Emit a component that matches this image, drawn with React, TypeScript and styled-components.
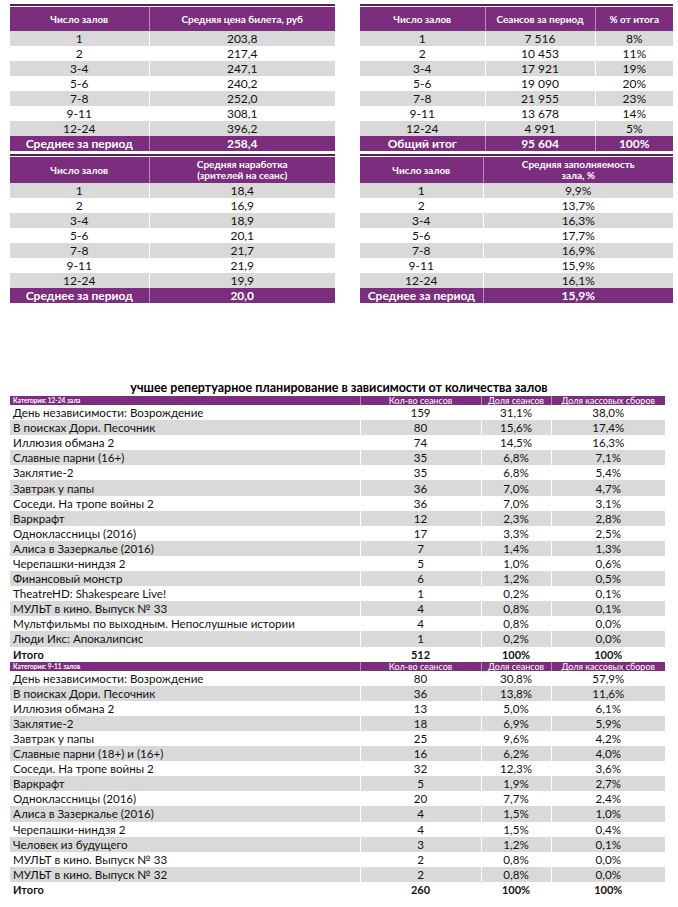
import React from 'react';
import styled, { createGlobalStyle } from 'styled-components';

const PURPLE = '#7b2d7e';
const PURPLE_DARK = '#5a1f5c';
const STRIPE = '#d9d9d9';

type SummaryTable = {
    headers: string[][];
    cols: number[];
    rows: string[][];
    total: string[];
    tall?: boolean;
};

const summaries: SummaryTable[] = [
    {
        headers: [['Число залов'], ['Средняя цена билета, руб']],
        cols: [139, 186],
        rows: [
            ['1', '203,8'], ['2', '217,4'], ['3-4', '247,1'], ['5-6', '240,2'],
            ['7-8', '252,0'], ['9-11', '308,1'], ['12-24', '396,2'],
        ],
        total: ['Среднее за период', '258,4'],
    },
    {
        headers: [['Число залов'], ['Сеансов за период'], ['% от итога']],
        cols: [125, 110, 78],
        rows: [
            ['1', '7 516', '8%'], ['2', '10 453', '11%'], ['3-4', '17 921', '19%'],
            ['5-6', '19 090', '20%'], ['7-8', '21 955', '23%'], ['9-11', '13 678', '14%'],
            ['12-24', '4 991', '5%'],
        ],
        total: ['Общий итог', '95 604', '100%'],
    },
    {
        headers: [['Число залов'], ['Средняя наработка', '(зрителей на сеанс)']],
        cols: [139, 186],
        rows: [
            ['1', '18,4'], ['2', '16,9'], ['3-4', '18,9'], ['5-6', '20,1'],
            ['7-8', '21,7'], ['9-11', '21,9'], ['12-24', '19,9'],
        ],
        total: ['Среднее за период', '20,0'],
        tall: true,
    },
    {
        headers: [['Число залов'], ['Средняя заполняемость', 'зала, %']],
        cols: [123, 190],
        rows: [
            ['1', '9,9%'], ['2', '13,7%'], ['3-4', '16,3%'], ['5-6', '17,7%'],
            ['7-8', '16,9%'], ['9-11', '15,9%'], ['12-24', '16,1%'],
        ],
        total: ['Среднее за период', '15,9%'],
        tall: true,
    },
];

type Category = {
    title: string;
    films: [string, string, string, string][];
    total: [string, string, string];
};

const categories: Category[] = [
    {
        title: 'Категория: 12-24 зала',
        films: [
            ['День независимости: Возрождение', '159', '31,1%', '38,0%'],
            ['В поисках Дори. Песочник', '80', '15,6%', '17,4%'],
            ['Иллюзия обмана 2', '74', '14,5%', '16,3%'],
            ['Славные парни (16+)', '35', '6,8%', '7,1%'],
            ['Заклятие-2', '35', '6,8%', '5,4%'],
            ['Завтрак у папы', '36', '7,0%', '4,7%'],
            ['Соседи. На тропе войны 2', '36', '7,0%', '3,1%'],
            ['Варкрафт', '12', '2,3%', '2,8%'],
            ['Одноклассницы (2016)', '17', '3,3%', '2,5%'],
            ['Алиса в Зазеркалье (2016)', '7', '1,4%', '1,3%'],
            ['Черепашки-ниндзя 2', '5', '1,0%', '0,6%'],
            ['Финансовый монстр', '6', '1,2%', '0,5%'],
            ['TheatreHD: Shakespeare Live!', '1', '0,2%', '0,1%'],
            ['МУЛЬТ в кино. Выпуск № 33', '4', '0,8%', '0,1%'],
            ['Мультфильмы по выходным. Непослушные истории', '4', '0,8%', '0,0%'],
            ['Люди Икс: Апокалипсис', '1', '0,2%', '0,0%'],
        ],
        total: ['512', '100%', '100%'],
    },
    {
        title: 'Категория: 9-11 залов',
        films: [
            ['День независимости: Возрождение', '80', '30,8%', '57,9%'],
            ['В поисках Дори. Песочник', '36', '13,8%', '11,6%'],
            ['Иллюзия обмана 2', '13', '5,0%', '6,1%'],
            ['Заклятие-2', '18', '6,9%', '5,9%'],
            ['Завтрак у папы', '25', '9,6%', '4,2%'],
            ['Славные парни (18+) и (16+)', '16', '6,2%', '4,0%'],
            ['Соседи. На тропе войны 2', '32', '12,3%', '3,6%'],
            ['Варкрафт', '5', '1,9%', '2,7%'],
            ['Одноклассницы (2016)', '20', '7,7%', '2,4%'],
            ['Алиса в Зазеркалье (2016)', '4', '1,5%', '1,0%'],
            ['Черепашки-ниндзя 2', '4', '1,5%', '0,4%'],
            ['Человек из будущего', '3', '1,2%', '0,1%'],
            ['МУЛЬТ в кино. Выпуск № 33', '2', '0,8%', '0,0%'],
            ['МУЛЬТ в кино. Выпуск № 32', '2', '0,8%', '0,0%'],
        ],
        total: ['260', '100%', '100%'],
    },
];

const App = () => {
    return (
        <Page>
            <GlobalStyle />
            <SummaryGrid>
                {summaries.map((t, i) => (
                    <Panel key={i}>
                        <Table>
                            <colgroup>
                                {t.cols.map((w, j) => <col key={j} style={{ width: w }} />)}
                            </colgroup>
                            <thead>
                                <HeadRow $tall={t.tall}>
                                    {t.headers.map((lines, j) => (
                                        <HeadCell key={j}>
                                            {lines.map((l, k) => <div key={k}>{l}</div>)}
                                        </HeadCell>
                                    ))}
                                </HeadRow>
                            </thead>
                            <tbody>
                                {t.rows.map((r, j) => (
                                    <BodyRow key={j} $striped={j % 2 === 0}>
                                        {r.map((c, k) => <BodyCell key={k}>{c}</BodyCell>)}
                                    </BodyRow>
                                ))}
                                <TotalRow>
                                    {t.total.map((c, k) => <TotalCell key={k}>{c}</TotalCell>)}
                                </TotalRow>
                            </tbody>
                        </Table>
                    </Panel>
                ))}
            </SummaryGrid>

            <Title>учшее репертуарное планирование в зависимости от количества залов</Title>

            <FilmTable>
                <colgroup>
                    <col style={{ width: 350 }} />
                    <col style={{ width: 121 }} />
                    <col style={{ width: 70 }} />
                    <col style={{ width: 114 }} />
                </colgroup>
                {categories.map((cat, i) => (
                    <tbody key={i}>
                        <CategoryRow>
                            <CategoryTitle>{cat.title}</CategoryTitle>
                            <CategoryCell>Кол-во сеансов</CategoryCell>
                            <CategoryCell>Доля сеансов</CategoryCell>
                            <CategoryCell>Доля кассовых сборов</CategoryCell>
                        </CategoryRow>
                        {cat.films.map((f, j) => (
                            <FilmRow key={j} $striped={j % 2 === 1}>
                                <FilmName>{f[0]}</FilmName>
                                <FilmNum>{f[1]}</FilmNum>
                                <FilmNum>{f[2]}</FilmNum>
                                <FilmNum>{f[3]}</FilmNum>
                            </FilmRow>
                        ))}
                        <FilmRow $bold>
                            <FilmName>Итого</FilmName>
                            {cat.total.map((c, k) => <FilmNum key={k}>{c}</FilmNum>)}
                        </FilmRow>
                    </tbody>
                ))}
            </FilmTable>
        </Page>
    );
};

export default App;

// Styled Components
const GlobalStyle = createGlobalStyle`
  body {
    margin: 0;
    background: #fff;
    font-family: Lato, "Open Sans", "Noto Sans", sans-serif;
    color: #111;
  }
`;

const Page = styled.div`
  width: 678px;
  min-height: 907px;
  box-sizing: border-box;
  padding: 4px 5px 0 10px;
`;

const SummaryGrid = styled.div`
  display: grid;
  grid-template-columns: 325px 313px;
  column-gap: 25px;
  row-gap: 3px;
`;

const Panel = styled.div`
  border-top: 2px solid ${PURPLE_DARK};
  padding-top: 1px;
`;

const Table = styled.table`
  width: 100%;
  border-collapse: collapse;
  table-layout: fixed;
`;

const HeadRow = styled.tr<{ $tall?: boolean }>`
  height: ${(p) => (p.$tall ? '26px' : '24px')};
  background: ${PURPLE};
`;

const HeadCell = styled.th`
  padding: 0 4px;
  color: #fff;
  font-size: 10px;
  font-weight: 700;
  line-height: 11px;
  text-align: center;
  vertical-align: middle;
  & + & {
    border-left: 1px solid rgba(255, 255, 255, 0.45);
  }
`;

const BodyRow = styled.tr<{ $striped?: boolean }>`
  height: 15px;
  background: ${(p) => (p.$striped ? STRIPE : '#fff')};
`;

const BodyCell = styled.td`
  padding: 0;
  font-size: 12px;
  line-height: 15px;
  text-align: center;
  & + & {
    border-left: 1px solid #fff;
  }
`;

const TotalRow = styled.tr`
  height: 15px;
  background: ${PURPLE};
`;

const TotalCell = styled.td`
  padding: 0;
  color: #fff;
  font-size: 12px;
  font-weight: 700;
  line-height: 15px;
  text-align: center;
  white-space: nowrap;
  & + & {
    border-left: 1px solid rgba(255, 255, 255, 0.45);
  }
`;

const Title = styled.h2`
  margin: 78px 0 1px;
  padding-right: 5px;
  font-size: 12.5px;
  font-weight: 700;
  line-height: 14px;
  text-align: center;
  color: #000;
`;

const FilmTable = styled.table`
  width: 655px;
  border-collapse: collapse;
  table-layout: fixed;
`;

const CategoryRow = styled.tr`
  height: 9px;
  background: ${PURPLE};
`;

const CategoryTitle = styled.td`
  padding: 0 3px;
  color: #fff;
  font-size: 6.5px;
  font-weight: 700;
  line-height: 9px;
`;

const CategoryCell = styled.td`
  padding: 0;
  color: #fff;
  font-size: 9px;
  line-height: 9px;
  text-align: center;
  border-left: 1px solid rgba(255, 255, 255, 0.45);
`;

const FilmRow = styled.tr<{ $striped?: boolean; $bold?: boolean }>`
  height: 15.1px;
  background: ${(p) => (p.$striped ? STRIPE : '#fff')};
  font-weight: ${(p) => (p.$bold ? 700 : 400)};
  font-size: ${(p) => (p.$bold ? '11px' : '11.6px')};
`;

const FilmName = styled.td`
  padding: 0 3px;
  line-height: 15px;
  white-space: nowrap;
`;

const FilmNum = styled.td`
  padding: 0;
  line-height: 15px;
  text-align: center;
  border-left: 1px solid #fff;
`;
